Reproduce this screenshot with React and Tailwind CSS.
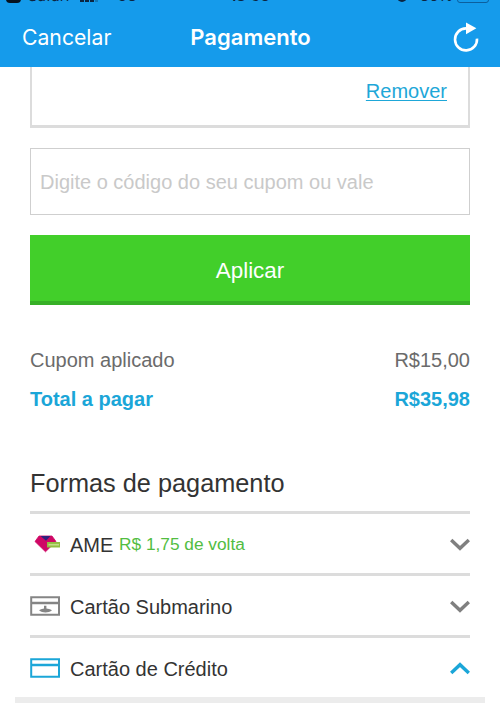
function StatusBar() {
  return (
    <div className="flex h-[4px] items-end overflow-hidden pl-[6px] pr-[11px] font-['Inter',sans-serif] text-[16px] leading-[20px] text-[#0b2440]">
      <div className="mb-[1px] h-[20px] w-[15px] shrink-0 rounded-[4px] bg-[#06121f]" />
      <span className="relative top-[2px] ml-[7px] w-[52px] shrink-0 text-[15px]">Safari</span>
      <div className="flex h-[4px] w-[38px] shrink-0 gap-[1px] pb-[2px]">
        <i className="w-[4px] bg-current" />
        <i className="w-[4px] bg-current" />
        <i className="w-[4px] bg-current" />
        <i className="w-[3px] bg-current opacity-30" />
      </div>
      <span className="relative top-[2px] w-[112px] shrink-0 text-[14px]">3G</span>
      <span className="relative top-[2px] w-[167px] shrink-0 text-[15px] font-semibold">18:56</span>
      <div className="mb-[2px] h-[10px] w-[10px] shrink-0 rounded-full bg-current" />
      <span className="relative top-[2px] ml-[13px] w-[37px] shrink-0 text-[15px]">36%</span>
      <div className="mb-[1px] h-[14px] w-[32px] shrink-0 rounded-[3px] border border-[#0c5f9d]" />
    </div>
  );
}

function RefreshIcon() {
  return (
    <svg className="h-[30px] w-[26px]" viewBox="0 0 26 30" fill="none">
      <path d="M13.8 6.4H13A11 11 0 1 0 24 16.6" stroke="white" strokeWidth="2.6" />
      <path d="M13 0.6L23.4 6.2L13 12.2Z" fill="white" />
    </svg>
  );
}

function AmeIcon() {
  return (
    <svg className="h-[20px] w-[30px]" viewBox="0 0 30 20">
      <path d="M9 2H22L26 7.5L15.5 17.8L5 7.5Z" fill="#cf0765" stroke="#cf0765" strokeWidth="0.8" strokeLinejoin="round" />
      <path d="M10.5 2H20.5L16 6.7Z" fill="#30207d" />
      <path d="M17 8H30V13.5H17Z" fill="#91bd42" />
      <path d="M18.5 10.7H29" stroke="#c3dc86" strokeWidth="1.6" />
    </svg>
  );
}

function CardIcon({ submarine }) {
  return (
    <svg className="h-[20px] w-[30px]" viewBox="0 0 30 20" fill="none" stroke="currentColor">
      <path d="M1.2 1.3H29V18.7H1.2Z" strokeWidth="2" />
      <path d="M1 7H29" strokeWidth="2.5" />
      {submarine && (
        <path
          d="M9 14.3C11 13 13 12.8 14 12.5V9.8H16.4V12.5C18 12.8 20 13 22 14.3C20.5 16.1 17.5 16.4 15.5 16.4C13.2 16.4 10.7 16.1 9 14.3Z"
          fill="currentColor"
          stroke="none"
        />
      )}
    </svg>
  );
}

function Chevron({ up }) {
  return (
    <svg className="ml-auto mt-[2px] h-[13px] w-[20px]" viewBox="0 0 20 13" fill="none" stroke="currentColor" strokeWidth="3.4">
      <path d={up ? "M1.2 11L10 2.7L18.8 11" : "M1.2 2L10 10.3L18.8 2"} />
    </svg>
  );
}

export default function App() {
  return (
    <div className="flex h-[703px] w-[500px] flex-col overflow-hidden bg-white font-['Liberation_Sans',Arial,sans-serif] text-[20px] leading-[24px] text-[#333]">
      <header className="h-[67px] shrink-0 bg-[#159beb] text-white">
        <StatusBar />
        <div className="grid h-[66px] grid-cols-3 items-center pl-[22px] pr-[21px] font-['Inter',sans-serif] text-[21.2px]">
          <span>Cancelar</span>
          <h1 className="text-center text-[22px] font-semibold">Pagamento</h1>
          <div className="flex justify-end">
            <RefreshIcon />
          </div>
        </div>
      </header>

      <main className="flex flex-col px-[30px]">
        <section className="h-[61px] border-x-2 border-b-[3px] border-[#dcdcdc] pr-[21px] pt-[12px] text-right">
          <a className="text-[#1ea7d8] underline decoration-1 underline-offset-[2px]">Remover</a>
        </section>
        <div className="mt-[20px] flex h-[67px] items-center border border-[#cfcfcf] pl-[9px] text-[#c9c9c9]">
          Digite o código do seu cupom ou vale
        </div>
        <button className="mt-[20px] h-[70px] border-b-4 border-[#37b027] bg-[#42cf2a] pt-[5px] text-[22.4px] text-white">
          Aplicar
        </button>

        <div className="mt-[43px] flex justify-between text-[#6b6b6b]">
          <span>Cupom aplicado</span>
          <span>R$15,00</span>
        </div>
        <div className="mt-[15px] flex justify-between font-bold text-[#1ba6d8]">
          <span>Total a pagar</span>
          <span>R$35,98</span>
        </div>

        <h2 className="mt-[57px] h-[43px] text-[25.3px] leading-[30px]">Formas de pagamento</h2>
        <div className="flex h-[62px] items-center border-t-[3px] border-[#dcdcdc]">
          <AmeIcon />
          <span className="ml-[10px] w-[49px] pt-[3px]">AME</span>
          <span className="text-[17.3px] text-[#52bd42]">R$ 1,75 de volta</span>
          <span className="ml-auto text-[#808080]"><Chevron /></span>
        </div>
        <div className="flex h-[62px] items-center border-t-[3px] border-[#dcdcdc]">
          <span className="text-[#858585]"><CardIcon submarine /></span>
          <span className="ml-[10px] pt-[3px]">Cartão Submarino</span>
          <span className="ml-auto text-[#808080]"><Chevron /></span>
        </div>
        <div className="flex h-[62px] items-center border-t-[3px] border-[#dcdcdc] text-[#1ba6d8]">
          <CardIcon />
          <span className="ml-[10px] pt-[3px] text-[#333]">Cartão de Crédito</span>
          <Chevron up />
        </div>
      </main>
      <div className="mx-[15px] h-[6px] shrink-0 bg-[#ececec]" />
    </div>
  );
}
